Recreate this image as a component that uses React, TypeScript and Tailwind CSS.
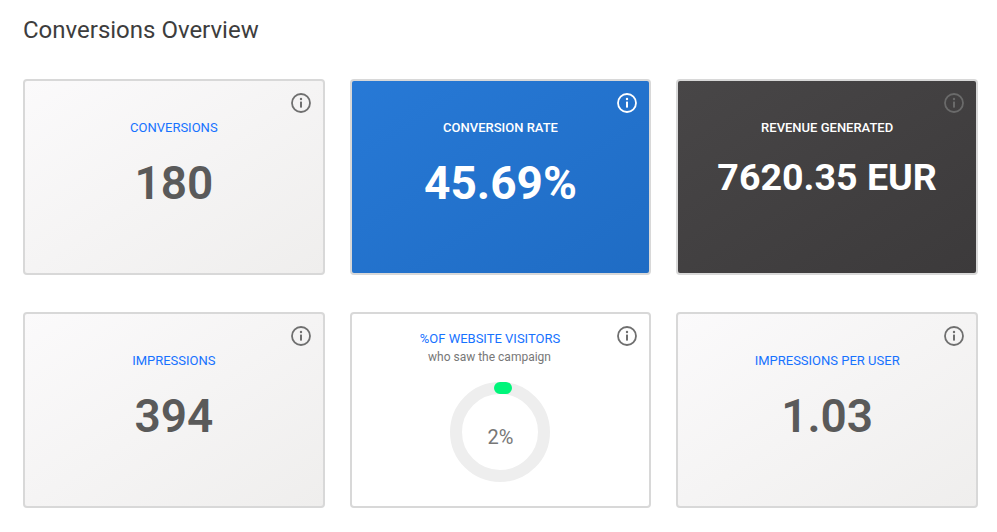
const InfoIcon = ({ className }: { className: string }) => (
    <svg viewBox="0 0 20 20" className={`absolute top-[12px] right-[12px] w-5 h-5 ${className}`} fill="none">
        <circle cx="10" cy="10" r="9" stroke="currentColor" strokeWidth="1.8" />
        <circle cx="10" cy="6" r="1.2" fill="currentColor" />
        <rect x="9" y="8.6" width="2" height="6" fill="currentColor" />
    </svg>
);

interface StatCardProps {
    label: string;
    value: string;
    card?: string;
    labelColor?: string;
    valueClass?: string;
    icon?: string;
}

const StatCard = ({
    label,
    value,
    card = "border-[#d8d8d8] bg-gradient-to-br from-[#fbfafb] to-[#efeeed]",
    labelColor = "text-[#1672ff]",
    valueClass = "mt-[16px] text-[46px] leading-[60px] font-semibold text-[#5a5a5a]",
    icon = "text-[#6f6f6f]",
}: StatCardProps) => {
    return (
        <div className={`relative h-[196px] rounded-[4px] border-2 pt-[38px] flex flex-col items-center ${card}`}>
            <InfoIcon className={icon} />
            <div className={`text-[13px] leading-[18px] ${labelColor}`}>{label}</div>
            <div className={valueClass}>{value}</div>
        </div>
    );
};

export default function App() {
    return (
        <div className="w-[997px] h-[532px] bg-white pl-[23px] font-['Roboto',sans-serif] overflow-hidden">
            <h1 className="pt-[15px] text-[24px] leading-[30px] font-normal text-[#3d3d3d]">Conversions Overview</h1>
            <div className="mt-[34px] w-[955px] grid grid-cols-3 gap-x-[25px] gap-y-[37px]">
                <StatCard label="CONVERSIONS" value="180" />
                <StatCard
                    label="CONVERSION RATE"
                    value="45.69%"
                    card="border-[#d8d8d8] bg-gradient-to-br from-[#2779d6] to-[#1f6cc4]"
                    labelColor="text-white font-medium"
                    valueClass="mt-[16px] text-[46px] leading-[60px] font-bold text-white"
                    icon="text-white"
                />
                <StatCard
                    label="REVENUE GENERATED"
                    value="7620.35 EUR"
                    card="border-[#d8d8d8] bg-gradient-to-br from-[#484647] to-[#3c3a3b]"
                    labelColor="text-white font-medium"
                    valueClass="mt-[12px] text-[37.6px] leading-[56px] font-bold text-white"
                    icon="text-[#6a6a6a]"
                />
                <StatCard label="IMPRESSIONS" value="394" />
                <div className="relative h-[196px] rounded-[4px] border-2 border-[#d8d8d8] bg-white pt-[15px] flex flex-col items-center">
                    <InfoIcon className="text-[#6f6f6f]" />
                    <div className="pr-[21px] text-[13px] leading-[19px] text-[#1672ff]">%OF WEBSITE VISITORS</div>
                    <div className="pr-[22px] text-[12px] leading-[18px] text-[#777777]">who saw the campaign</div>
                    <div className="relative mt-[16px] w-[100px] h-[100px] rounded-full border-[12px] border-[#eeeeee] flex items-center justify-center">
                        <span className="text-[20px] leading-none pt-[10px] text-[#777777]">2%</span>
                        <div className="absolute top-[-12px] left-[32px] w-[18px] h-[12px] rounded-full bg-[#00f57a]" />
                    </div>
                </div>
                <StatCard label="IMPRESSIONS PER USER" value="1.03" />
            </div>
        </div>
    );
}
